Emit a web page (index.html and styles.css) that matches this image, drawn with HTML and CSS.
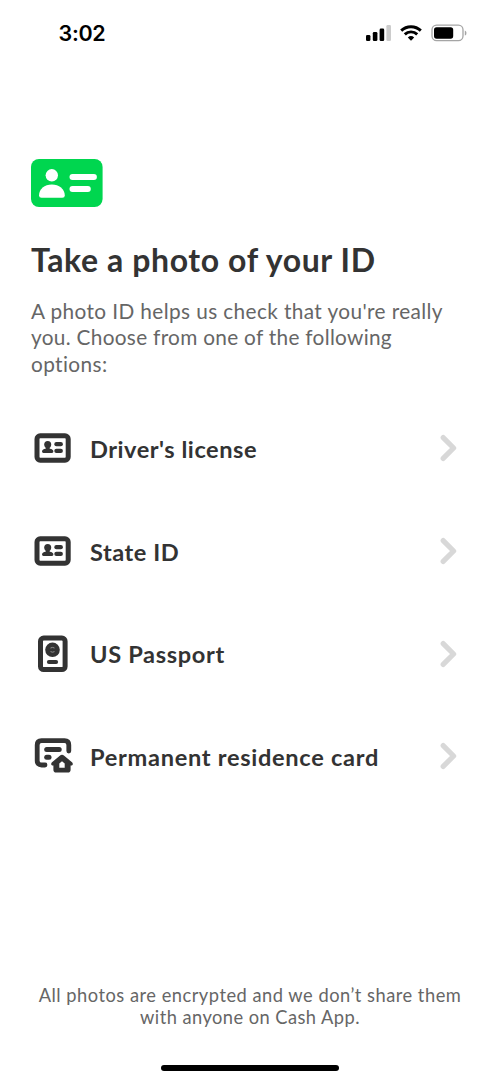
FILE: index.html
```html
<!DOCTYPE html>
<html lang="en">
<head>
<meta charset="utf-8">
<title>Take a photo of your ID</title>
<link rel="stylesheet" href="styles.css">
</head>
<body>
<div class="screen">
  <header class="status">
    <span class="time">3:02</span>
    <svg class="indicators" viewBox="0 0 104 20" width="104" height="20">
      <rect x="1" y="11" width="4.4" height="6" rx="1.3"/>
      <rect x="7.8" y="8" width="4.6" height="9" rx="1.3"/>
      <rect x="14.6" y="4.6" width="4.6" height="12.4" rx="1.3"/>
      <rect x="21.4" y="1" width="4.6" height="16" rx="1.3" fill="#ccc"/>
      <g fill="none" stroke="#000" stroke-width="2.9">
        <path d="M36.2 6.6a14.2 14.2 0 0 1 19.6 0"/>
        <path d="M39.8 10.4a8.8 8.8 0 0 1 12.4 0"/>
      </g>
      <path d="M42.8 13.5a4.7 4.7 0 0 1 6.4 0L46 16.8z"/>
      <rect x="67" y="1.1" width="31" height="15.6" rx="4.6" fill="none" stroke="#a5a5a5" stroke-width="1.3"/>
      <rect x="69" y="3.2" width="19.2" height="11.5" rx="2.6"/>
      <path d="M99.8 6.4c2.2.8 2.2 4.4 0 5.2z" fill="#a5a5a5"/>
    </svg>
  </header>

  <main class="content">
    <svg class="badge" viewBox="0 0 72 48" width="72" height="48">
      <rect width="71.6" height="48" rx="8" fill="#00d64f"/>
      <g fill="#fff">
        <circle cx="20.8" cy="16.3" r="6.2"/>
        <path d="M8 36.5C8 29.8 13.6 25.4 20.8 25.4S33.8 29.8 33.8 36.5Q33.8 38.8 31.3 38.8H10.5Q8 38.8 8 36.5z"/>
        <rect x="38.5" y="15" width="27.4" height="6" rx="3"/>
        <rect x="38.5" y="27" width="21.3" height="6" rx="3"/>
      </g>
    </svg>
    <h1 class="title">Take a photo of your ID</h1>
    <p class="intro">
      <span class="line l1">A photo ID helps us check that you're really</span>
      <span class="line l2">you. Choose from one of the following</span>
      <span class="line l3">options:</span>
    </p>

    <ul class="options">
      <li class="option">
        <svg class="icon" viewBox="0 0 44 44" width="44" height="44"><use href="#card"/></svg>
        <span class="label license">Driver's license</span>
        <svg class="chevron" viewBox="0 0 20 28" width="20" height="28"><use href="#next"/></svg>
      </li>
      <li class="option">
        <svg class="icon" viewBox="0 0 44 44" width="44" height="44"><use href="#card"/></svg>
        <span class="label state">State ID</span>
        <svg class="chevron" viewBox="0 0 20 28" width="20" height="28"><use href="#next"/></svg>
      </li>
      <li class="option">
        <svg class="icon" viewBox="0 0 44 44" width="44" height="44">
          <rect x="9.5" y="6" width="24.600" height="31.600" rx="3.2" fill="none" stroke="#333" stroke-width="5"/>
          <circle cx="21.500" cy="17.8" r="7.3"/>
          <path d="M19.500 16q2-1.2 4 0M19.500 19.6q2 1.2 4 0" fill="none" stroke="#999" stroke-width=".9"/>
          <rect x="15.9" y="27.9" width="11.2" height="4.2" rx="2"/>
        </svg>
        <span class="label passport">US Passport</span>
        <svg class="chevron" viewBox="0 0 20 28" width="20" height="28"><use href="#next"/></svg>
      </li>
      <li class="option">
        <svg class="icon" viewBox="0 0 44 44" width="44" height="44">
          <path d="M14 31H10.5Q6.2 31 6.2 26.7V10.9Q6.2 6.6 10.5 6.6H33.5Q37.8 6.6 37.8 10.9V17" fill="none" stroke="#333" stroke-width="4.8" stroke-linecap="round"/>
          <rect x="13.2" y="13" width="17.5" height="5" rx="2.5"/>
          <rect x="13.2" y="20.8" width="7.3" height="5" rx="2.5"/>
          <path fill-rule="evenodd" d="M28.8 21.7Q31 20 33.2 21.7L41 28.2Q42.3 29.6 41.5 30.9Q41 31.6 39.6 31.6V35.8Q39.6 38.6 36.8 38.6H25.2Q22.4 38.6 22.4 35.8V31.6Q21 31.6 20.5 30.9Q19.7 29.6 21 28.2zM28.3 33.8H33.7V29.6L31 27.2L28.3 29.6z"/>
        </svg>
        <span class="label residence">Permanent residence card</span>
        <svg class="chevron" viewBox="0 0 20 28" width="20" height="28"><use href="#next"/></svg>
      </li>
    </ul>
  </main>

  <footer class="footer">
    <p class="note">
      <span class="line n1">All photos are encrypted and we don’t share them</span>
      <span class="line n2">with anyone on Cash App.</span>
    </p>
    <div class="home-bar"></div>
  </footer>
</div>

<svg class="symbols" width="0" height="0">
  <symbol id="card" viewBox="0 0 44 44">
    <rect x="6" y="9.8" width="31.2" height="24.4" rx="3.2" fill="none" stroke="#333" stroke-width="5"/>
    <circle cx="16.7" cy="18.4" r="3.5"/>
    <path d="M14.7 20h4v2.7q3.7.5 3.7 2.9 0 1.4-1.4 1.4h-8.6q-1.4 0-1.4-1.4 0-2.4 3.7-2.9z"/>
    <rect x="23.3" y="16" width="8.6" height="4.2" rx="2"/>
    <rect x="23.3" y="22.8" width="8.6" height="4.2" rx="2"/>
  </symbol>
  <symbol id="next" viewBox="0 0 20 28">
    <path d="M4.2 3.6L14.6 14L4.2 24.4" fill="none" stroke="#d8d8d8" stroke-width="5.2" stroke-linecap="round" stroke-linejoin="round"/>
  </symbol>
</svg>
</body>
</html>
```
FILE: styles.css
```css
* { box-sizing: border-box; }
body {
  margin: 0;
  background: #fff;
  font-family: Lato, "Noto Sans", sans-serif;
}
.screen {
  width: 500px;
  height: 1082px;
  display: flex;
  flex-direction: column;
  overflow: hidden;
}
.symbols { display: none; }
.status {
  height: 159px;
  padding: 19px 31px 0 58.5px;
  display: flex;
  justify-content: space-between;
  align-items: flex-start;
}
.time {
  font: 600 21.5px/28px Inter, sans-serif;
  letter-spacing: -0.3px;
  color: #000;
}
.indicators { margin-top: 5px; }
.content { padding: 0 31px; }
.badge { display: block; }
.title {
  margin: 33px 0 0;
  font-size: 32px;
  font-weight: 700;
  line-height: 40px;
  letter-spacing: 0.6px;
  color: #333;
  white-space: nowrap;
}
.intro {
  margin: 17.6px 0 0;
  font-size: 20.8px;
  line-height: 26.7px;
  letter-spacing: 0.39px;
  color: #666;
}
.l2 { letter-spacing: 0.3px; }
.line { display: block; white-space: nowrap; }
.options {
  margin: 19.3px 0 0;
  padding: 0;
  list-style: none;
}
.option {
  height: 102.7px;
  display: flex;
  align-items: center;
}
.icon { fill: #333; }
.label {
  flex: 1;
  margin-left: 15px;
  padding-top: 1px;
  font-size: 23.6px;
  font-weight: 700;
  line-height: 30px;
  letter-spacing: 0.52px;
  color: #333;
  white-space: nowrap;
}
.passport { letter-spacing: 0.65px; }
.residence { letter-spacing: 0.7px; }
.chevron { margin-right: 10px; }
.footer {
  margin-top: auto;
  display: flex;
  flex-direction: column;
  align-items: center;
}
.note {
  margin: 0 0 37px;
  font-size: 18.3px;
  line-height: 22px;
  letter-spacing: 0.5px;
  text-align: center;
  color: #666;
}
.n2 { letter-spacing: 0.45px; }
.home-bar {
  width: 178px;
  height: 6px;
  margin: 0 0 11px;
  border-radius: 3px;
  background: #000;
}
```
